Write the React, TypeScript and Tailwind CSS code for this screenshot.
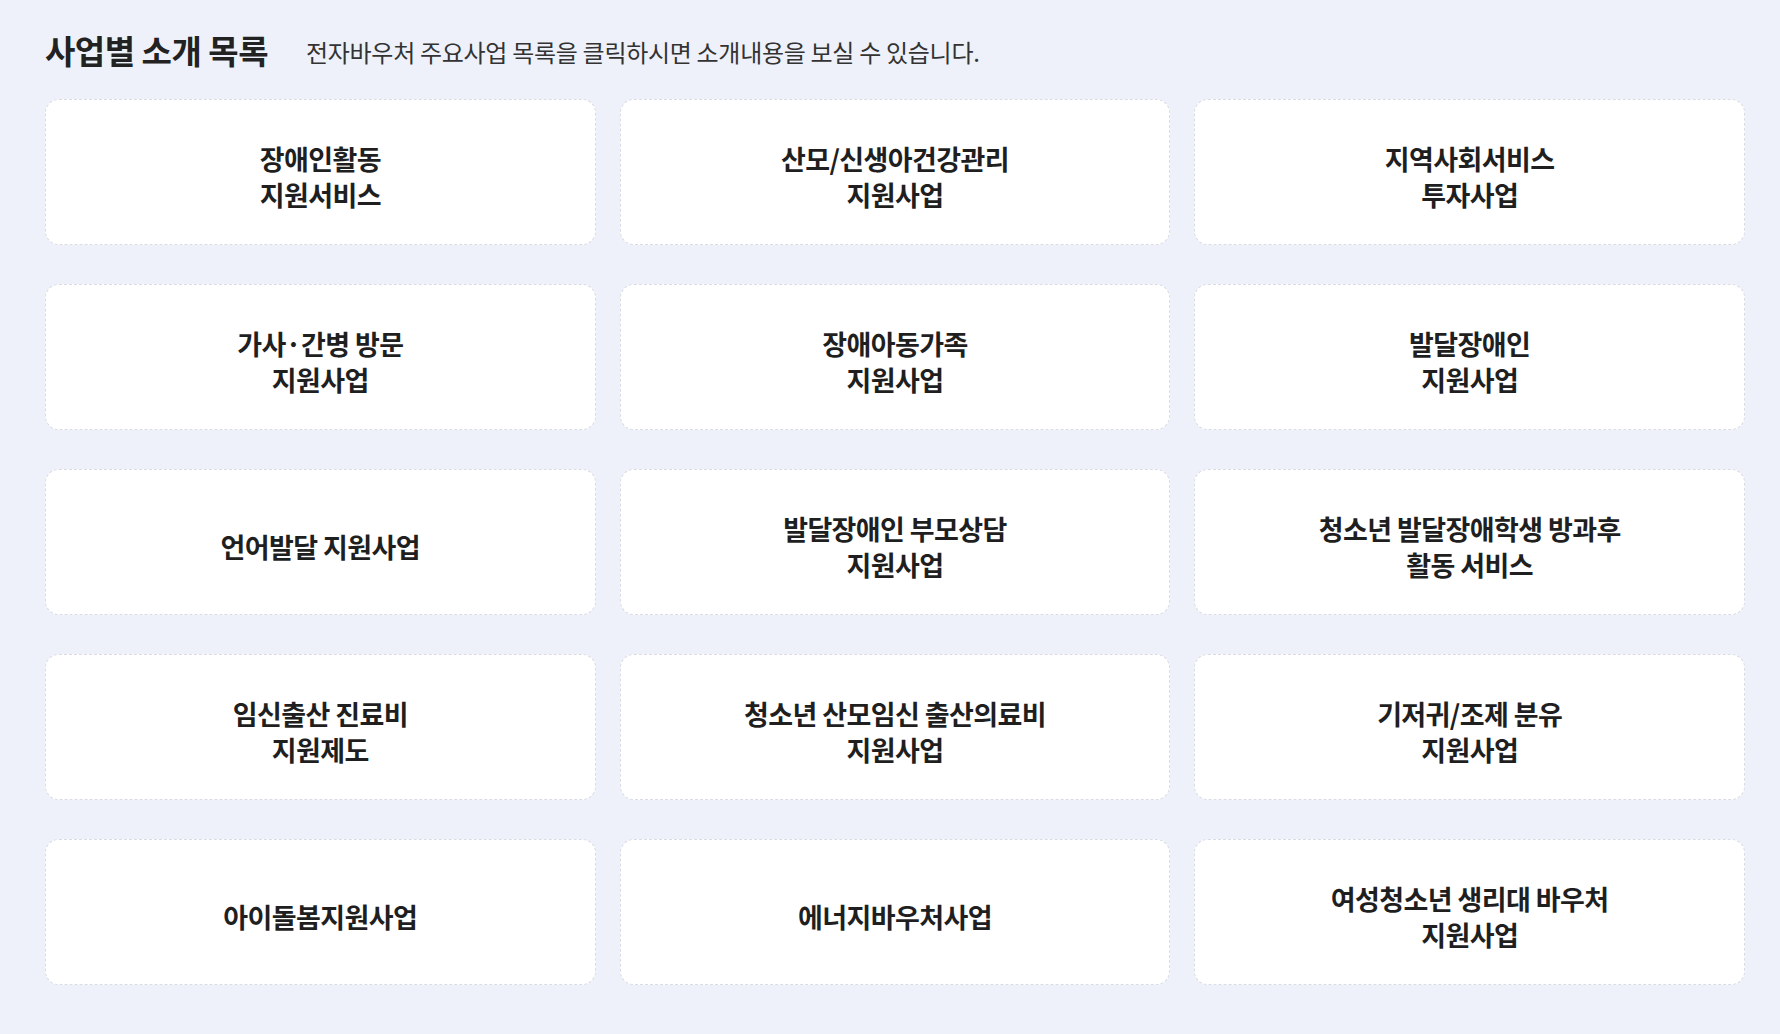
const items: string[][] = [
  ['장애인활동', '지원서비스'],
  ['산모/신생아건강관리', '지원사업'],
  ['지역사회서비스', '투자사업'],
  ['가사·간병 방문', '지원사업'],
  ['장애아동가족', '지원사업'],
  ['발달장애인', '지원사업'],
  ['언어발달 지원사업'],
  ['발달장애인 부모상담', '지원사업'],
  ['청소년 발달장애학생 방과후', '활동 서비스'],
  ['임신출산 진료비', '지원제도'],
  ['청소년 산모임신 출산의료비', '지원사업'],
  ['기저귀/조제 분유', '지원사업'],
  ['아이돌봄지원사업'],
  ['에너지바우처사업'],
  ['여성청소년 생리대 바우처', '지원사업'],
];

export default function App() {
  return (
    <div
      className="min-h-screen w-full bg-[#eef1f9] pl-[45px] pr-[35px] pt-[30px] pb-[48px]"
      style={{ fontFamily: '"Noto Sans CJK KR", "Noto Sans", sans-serif' }}
    >
      {/* Header */}
      <div className="flex items-baseline mb-[29px] h-[40px]">
        <h1 className="text-[33px] leading-[40px] font-bold text-[#222222] tracking-[-0.5px]">
          사업별 소개 목록
        </h1>
        <p className="ml-[38px] -translate-y-[2px] text-[24px] leading-[40px] text-[#333333] tracking-[-0.3px]">
          전자바우처 주요사업 목록을 클릭하시면 소개내용을 보실 수 있습니다.
        </p>
      </div>

      {/* Cards */}
      <div className="grid grid-cols-3 gap-x-[24px] gap-y-[39px]">
        {items.map((lines, i) => (
          <a
            key={i}
            href="#"
            className="flex h-[146px] flex-col items-center justify-center rounded-[14px] border border-dashed border-[#d9dce4] bg-white pt-[10px] text-center"
          >
            {lines.map((l, j) => (
              <span
                key={j}
                className="text-[27px] leading-[36px] font-bold text-[#1f1f1f] tracking-[-0.6px]"
              >
                {l}
              </span>
            ))}
          </a>
        ))}
      </div>
    </div>
  );
}
